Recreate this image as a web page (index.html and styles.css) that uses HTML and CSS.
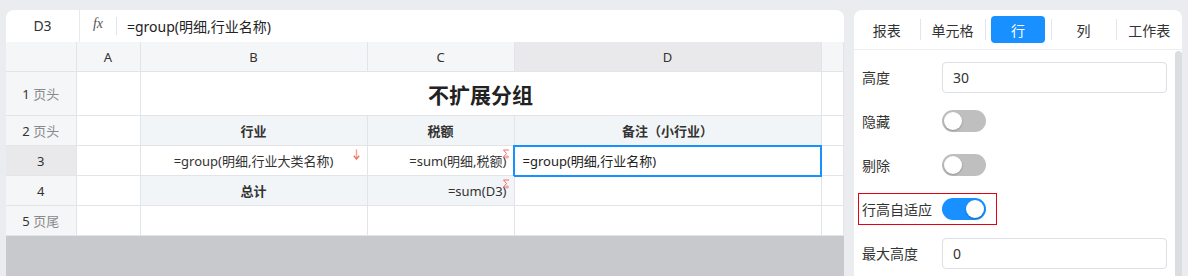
FILE: index.html
```html
<!DOCTYPE html>
<html lang="zh-CN">
<head>
  <meta charset="UTF-8">
  <title>不扩展分组</title>
  <link rel="stylesheet" href="styles.css">
</head>
<body>

  <!-- 左侧表格 -->
  <div class="sheet-panel">
    <div class="formula-bar">
      <div class="name-box">D3</div>
      <div class="fx"><span>fx</span></div>
      <div class="formula">=group(明细,行业名称)</div>
    </div>

    <table class="grid">
      <colgroup>
        <col class="c-rh"><col class="c-a"><col class="c-b"><col class="c-c"><col class="c-d"><col>
      </colgroup>
      <tr class="col-head">
        <th></th><th>A</th><th>B</th><th>C</th><th class="on">D</th><th></th>
      </tr>
      <tr class="r-title">
        <th class="rh">1 <span>页头</span></th>
        <td></td>
        <td colspan="3" class="title">不扩展分组</td>
        <td></td>
      </tr>
      <tr>
        <th class="rh">2 <span>页头</span></th>
        <td></td>
        <td class="head">行业</td>
        <td class="head">税额</td>
        <td class="head">备注（小行业）</td>
        <td></td>
      </tr>
      <tr>
        <th class="rh on">3</th>
        <td></td>
        <td class="center">=group(明细,行业大类名称)
          <svg class="mark-down" width="7" height="11" viewBox="0 0 7 11">
            <path d="M3.5 0.5 V9" stroke="#f9a08a" stroke-width="1.4"/>
            <path d="M0.8 6.8 L3.5 10 L6.2 6.8" fill="none" stroke="#f56c6c" stroke-width="1.4"/>
          </svg>
        </td>
        <td class="right">=sum(明细,税额)
          <svg class="mark-sum" width="8" height="10" viewBox="0 0 8 10">
            <path d="M7 1 H1.5 L4.5 4.5 L1.5 8 H7" fill="none" stroke="#f56c6c" stroke-width="1"/>
            <path d="M5 6 V10" stroke="#f9a08a" stroke-width="1"/>
          </svg>
        </td>
        <td class="selected">=group(明细,行业名称)</td>
        <td></td>
      </tr>
      <tr>
        <th class="rh">4</th>
        <td></td>
        <td class="head">总计</td>
        <td class="shaded right">=sum(D3)
          <svg class="mark-sum" width="8" height="10" viewBox="0 0 8 10">
            <path d="M7 1 H1.5 L4.5 4.5 L1.5 8 H7" fill="none" stroke="#f56c6c" stroke-width="1"/>
            <path d="M5 6 V10" stroke="#f9a08a" stroke-width="1"/>
          </svg>
        </td>
        <td></td>
        <td></td>
      </tr>
      <tr>
        <th class="rh">5 <span>页尾</span></th>
        <td></td><td></td><td></td><td></td><td></td>
      </tr>
    </table>

    <div class="sheet-rest"></div>
  </div>

  <!-- 右侧属性面板 -->
  <div class="side-panel">
    <div class="tabs">
      <div class="tab"><span>报表</span></div>
      <div class="tab"><span>单元格</span></div>
      <div class="tab active"><span>行</span></div>
      <div class="tab"><span>列</span></div>
      <div class="tab"><span>工作表</span></div>
    </div>

    <div class="panel-body">
      <div class="form">
        <div class="field">
          <label>高度</label>
          <div class="input">30</div>
        </div>
        <div class="field">
          <label>隐藏</label>
          <div class="switch"></div>
        </div>
        <div class="field">
          <label>剔除</label>
          <div class="switch"></div>
        </div>
        <div class="field">
          <div class="marked">
            <label>行高自适应</label>
            <div class="switch checked"></div>
          </div>
        </div>
        <div class="field">
          <label>最大高度</label>
          <div class="input">0</div>
        </div>
      </div>
      <div class="scrollbar"></div>
    </div>
  </div>

</body>
</html>
```

FILE: styles.css
```css
body {
  margin: 0;
  height: 276px;
  overflow: hidden;
  background: #ebecf0;
  font-family: "Noto Sans", "Noto Sans CJK SC", sans-serif;
  color: #333;
  display: flex;
  gap: 10px;
  padding: 10px 6px 0 6px;
  box-sizing: border-box;
}

/* 左侧表格 */
.sheet-panel {
  width: 838px;
  background: #fff;
  border-radius: 8px 8px 0 0;
  overflow: hidden;
  display: flex;
  flex-direction: column;
}

.formula-bar {
  height: 32px;
  display: flex;
  align-items: center;
  font-size: 14px;
  flex-shrink: 0;
}

.name-box {
  width: 74px;
  height: 32px;
  line-height: 32px;
  text-align: center;
  border-right: 1px solid #e8e9ec;
  box-sizing: border-box;
}

.fx {
  width: 36px;
  height: 18px;
  display: flex;
  align-items: center;
  justify-content: center;
  border-right: 1px solid #e4e5e8;
  font-family: "Liberation Serif", serif;
  font-style: italic;
  font-size: 14px;
  color: #555;
}

.fx span {
  margin-top: -4px;
}

.formula {
  padding-left: 10px;
  color: #222;
}

.grid {
  width: 838px;
  table-layout: fixed;
  border-collapse: collapse;
  font-size: 13px;
  flex-shrink: 0;
}

.c-rh { width: 70px; }
.c-a { width: 64px; }
.c-b { width: 227px; }
.c-c { width: 147px; }
.c-d { width: 307px; }

.grid th,
.grid td {
  border: 1px solid #e2e4e8;
  padding: 0;
  height: 29px;
  white-space: nowrap;
  overflow: visible;
  position: relative;
}

.grid tr > :first-child {
  border-left: none;
}

.col-head th {
  height: 29px;
  background: #f5f6f8;
  font-weight: normal;
  color: #333;
  border-top: none;
}

.col-head th.on,
.grid th.rh.on {
  background: #e9e9ec;
}

.grid th.rh {
  background: #f5f6f8;
  font-weight: normal;
  color: #333;
}

.grid th.rh span {
  color: #8a8a8a;
}

.r-title th,
.r-title td {
  height: 43px;
}

.title {
  text-align: center;
  font-size: 21px;
  font-weight: bold;
  color: #222;
}

.head {
  background: #f2f5f7;
  text-align: center;
  font-weight: bold;
  color: #333;
}

.grid td.shaded {
  background: #f2f5f7;
}

.center {
  text-align: center;
}

.grid td.right {
  text-align: right;
  padding-right: 7px;
}

.grid td.selected {
  outline: 2px solid #1890ff;
  outline-offset: -1px;
  padding-left: 8px;
  color: #222;
}

.mark-down {
  position: absolute;
  top: 3px;
  right: 7px;
}

.mark-sum {
  position: absolute;
  top: 3px;
  right: 4px;
}

.sheet-rest {
  flex: 1;
  background: #c8c9cc;
}

/* 右侧属性面板 */
.side-panel {
  width: 328px;
  background: #fff;
  border-radius: 8px 8px 0 0;
  display: flex;
  flex-direction: column;
}

.tabs {
  display: flex;
  height: 40px;
  padding: 6px 0;
  box-sizing: border-box;
  border-bottom: 1px solid #ebedf0;
  font-size: 14px;
}

.tab {
  flex: 1;
  padding: 0 6px;
  position: relative;
}

.tab + .tab::before {
  content: '';
  position: absolute;
  left: 0;
  top: 3px;
  bottom: 3px;
  width: 1px;
  background: #e4e5e8;
}

.tab span {
  display: flex;
  height: 100%;
  align-items: center;
  justify-content: center;
  border-radius: 4px;
  color: #333;
}

.tab.active span {
  background: #1890ff;
  color: #fff;
}

.panel-body {
  flex: 1;
  display: flex;
}

.form {
  flex: 1;
  padding: 5px 0 0 8px;
}

.field {
  height: 44px;
  display: flex;
  align-items: center;
  font-size: 14px;
}

.field label {
  width: 80px;
  color: #333;
}

.input {
  width: 225px;
  height: 31px;
  box-sizing: border-box;
  border: 1px solid #dcdfe6;
  border-radius: 4px;
  padding-left: 10px;
  line-height: 29px;
  color: #333;
}

.switch {
  width: 44px;
  height: 22px;
  border-radius: 11px;
  background: #bfbfbf;
  position: relative;
}

.switch::after {
  content: '';
  position: absolute;
  top: 2px;
  left: 2px;
  width: 18px;
  height: 18px;
  border-radius: 50%;
  background: #fff;
  box-shadow: 0 1px 2px rgba(0, 0, 0, 0.25);
}

.switch.checked {
  background: #1890ff;
}

.switch.checked::after {
  left: 24px;
}

.marked {
  display: flex;
  align-items: center;
  height: 32px;
  box-sizing: border-box;
  border: 1px solid #e60012;
  margin-left: -4px;
  padding: 0 10px 0 3px;
}

.scrollbar {
  width: 7px;
  margin-top: 1px;
  background: #dcdde1;
  border-radius: 4px 4px 0 0;
}
```
